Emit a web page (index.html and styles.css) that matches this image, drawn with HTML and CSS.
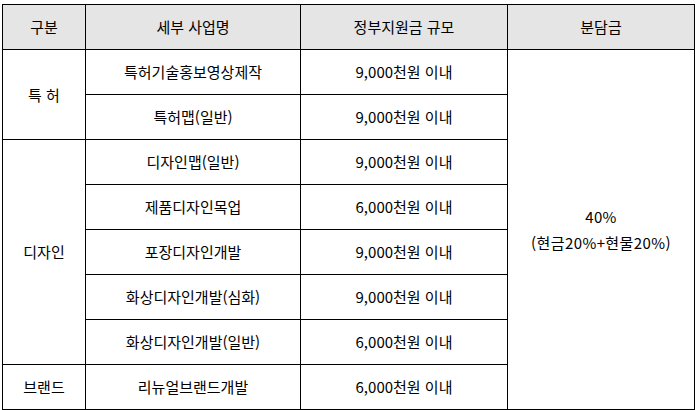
FILE: index.html
```html
<!DOCTYPE html>
<html lang="ko">
<head>
<meta charset="utf-8">
<link rel="stylesheet" href="styles.css">
</head>
<body>
<table class="grid">
  <colgroup>
    <col class="c1"><col class="c2"><col class="c3"><col class="c4">
  </colgroup>
  <thead>
    <tr><th>구분</th><th>세부 사업명</th><th>정부지원금 규모</th><th>분담금</th></tr>
  </thead>
  <tbody>
    <tr><td rowspan="2">특 허</td><td>특허기술홍보영상제작</td><td>9,000천원 이내</td><td rowspan="8" class="share">40%<br>(현금20%+현물20%)</td></tr>
    <tr><td>특허맵(일반)</td><td>9,000천원 이내</td></tr>
    <tr><td rowspan="5">디자인</td><td>디자인맵(일반)</td><td>9,000천원 이내</td></tr>
    <tr><td>제품디자인목업</td><td>6,000천원 이내</td></tr>
    <tr><td>포장디자인개발</td><td>9,000천원 이내</td></tr>
    <tr><td>화상디자인개발(심화)</td><td>9,000천원 이내</td></tr>
    <tr><td>화상디자인개발(일반)</td><td>6,000천원 이내</td></tr>
    <tr><td>브랜드</td><td>리뉴얼브랜드개발</td><td>6,000천원 이내</td></tr>
  </tbody>
</table>
</body>
</html>
```

FILE: styles.css
```css
html, body {
  margin: 0;
  background: #fff;
}
body {
  padding: 4px 0 0 2px;
  font-family: "Noto Sans CJK KR", "Noto Sans", sans-serif;
  font-size: 15px;
  color: #000;
}
.grid {
  border-collapse: collapse;
  table-layout: fixed;
  width: 693px;
}
.c1 { width: 83px; }
.c2 { width: 215px; }
.c3 { width: 207px; }
.c4 { width: 187px; }
.grid th,
.grid td {
  border: 1px solid #000;
  height: 44px;
  padding: 0;
  text-align: center;
  vertical-align: middle;
  font-weight: normal;
  line-height: 18px;
}
.grid th {
  background: #e5e5e5;
}
.grid .share {
  line-height: 26px;
  letter-spacing: 0.4px;
}
```
